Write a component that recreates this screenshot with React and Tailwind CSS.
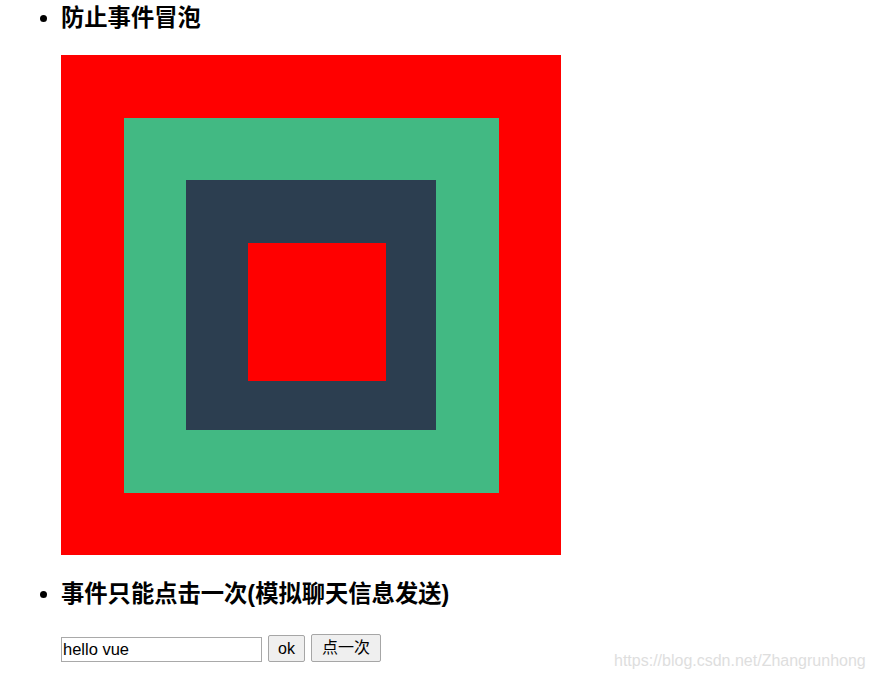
export default function App() {
  return (
    <div className="relative h-[677px] w-[873px] overflow-hidden bg-white font-['Liberation_Sans',sans-serif] text-black">
      <ul className="pl-[61px]">
        <li className="relative flex h-[38px] items-center">
          <span className="absolute left-[-21px] top-[15px] h-[7px] w-[7px] rounded-full bg-black" />
          <h3 className="font-['Liberation_Sans','Noto_Sans_CJK_SC',sans-serif] text-[23.3px] font-bold leading-none">
            防止事件冒泡
          </h3>
        </li>
        <li className="mt-[17px]">
          <div className="h-[500px] w-[500px] bg-[#ff0000] p-[62.5px]">
            <div className="h-full w-full bg-[#42b983] p-[62.5px]">
              <div className="h-full w-full bg-[#2c3e50] pl-[62px] pt-[62.5px]">
                <div className="h-[138px] w-[138px] bg-[#ff0000]" />
              </div>
            </div>
          </div>
        </li>
        <li className="relative mt-[21px] flex h-[38px] items-center">
          <span className="absolute left-[-21px] top-[15px] h-[7px] w-[7px] rounded-full bg-black" />
          <h3 className="font-['Liberation_Sans','Noto_Sans_CJK_SC',sans-serif] text-[23.3px] font-bold leading-none">
            事件只能点击一次(模拟聊天信息发送)
          </h3>
        </li>
        <li className="mt-[20px] flex items-end gap-[6px] font-['Liberation_Sans','Noto_Sans_CJK_SC',sans-serif] text-[16px]">
          <input
            type="text"
            defaultValue="hello vue"
            className="h-[25px] w-[201px] border border-[#a9a9a9] px-[1px] text-[16.5px] outline-none"
          />
          <button
            type="button"
            className="h-[27px] w-[37px] rounded-[2px] border border-[#a6a6a6] bg-[#efefef] text-[16px] leading-none"
          >
            ok
          </button>
          <button
            type="button"
            className="h-[28px] w-[70px] rounded-[2px] border border-[#a6a6a6] bg-[#efefef] text-[16px] leading-none"
          >
            点一次
          </button>
        </li>
      </ul>
      <span className="absolute left-[614px] top-[649px] text-[16px] text-[#dedede]">
        https://blog.csdn.net/Zhangrunhong
      </span>
    </div>
  )
}
